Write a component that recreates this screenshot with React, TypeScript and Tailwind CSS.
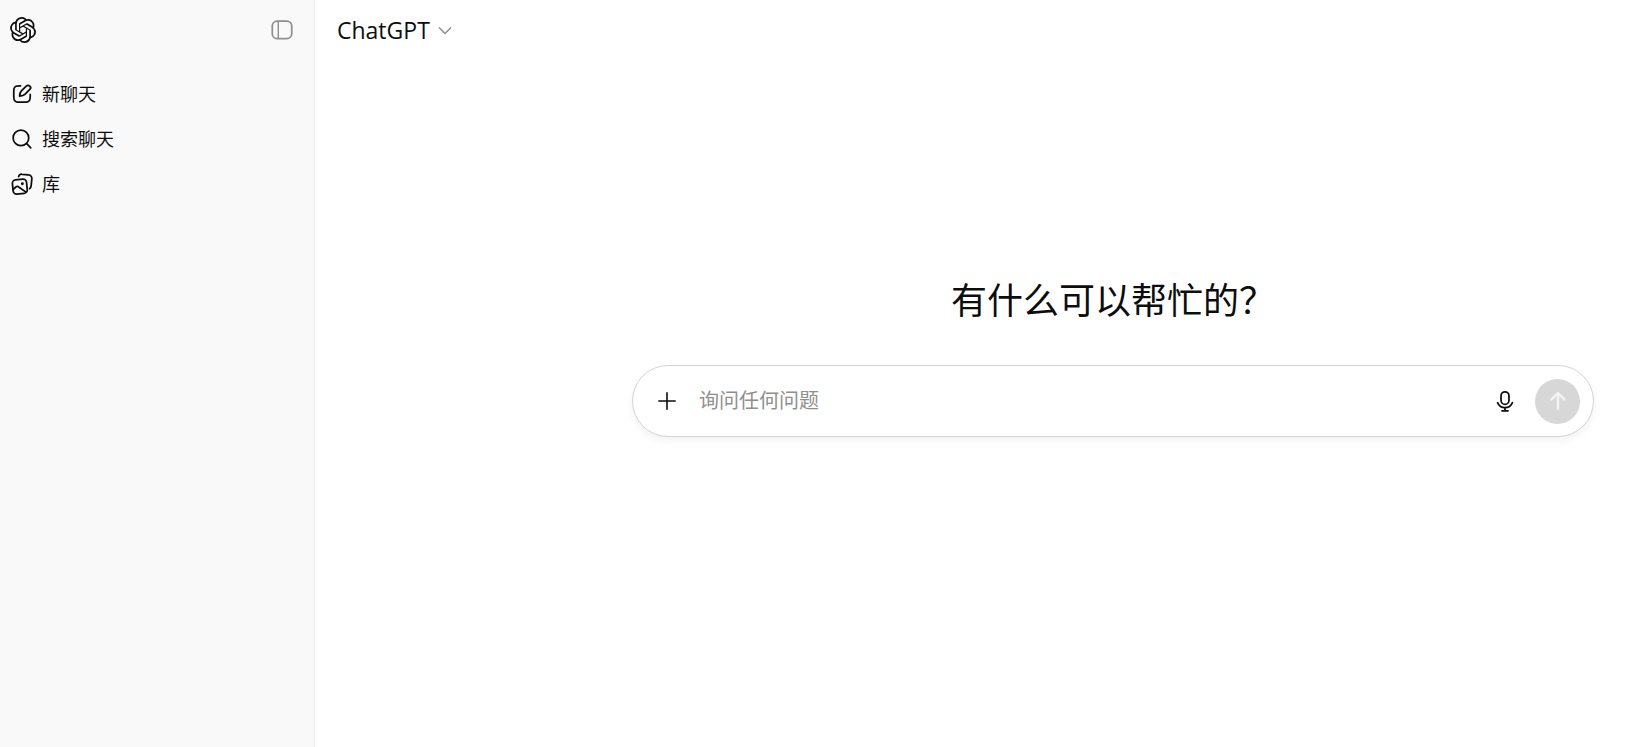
import React from 'react';
import { SiOpenai } from 'react-icons/si';

interface IconProps {
    className?: string;
}

const strokeProps = {
    viewBox: '0 0 20 20',
    fill: 'none',
    stroke: 'currentColor',
    strokeWidth: 1.45,
    strokeLinecap: 'round' as const,
    strokeLinejoin: 'round' as const,
    'aria-hidden': true,
};

const SidebarIcon: React.FC<IconProps> = ({ className }) => (
    <svg {...strokeProps} className={className}>
        <rect x="1.9" y="2.7" width="16.2" height="14.4" rx="4" />
        <path d="M6.9 3v14" strokeWidth={1.2} />
    </svg>
);

const EditIcon: React.FC<IconProps> = ({ className }) => (
    <svg {...strokeProps} className={className}>
        <path d="M8.8 3.2H8.1c-1.7 0-2.500.1-3.100.4A3.300 3.300 0 0 0 3.500 5.100c-.37.75-.37 1.700-.37 3.600v2.600c0 1.900 0 2.850.37 3.600a3.300 3.300 0 0 0 1.500 1.500c.75.37 1.700.37 3.600.37h2.800c1.900 0 2.850 0 3.600-.37a3.300 3.300 0 0 0 1.500-1.500c.37-.75.37-1.700.37-3.600v-.9" />
        <path d="M13.300 3.600 9.500 7.400c-.9.9-1.300 2.200-1.500 4.400 2.200-.2 3.500-.6 4.400-1.500l4.100-4.100c.8-.8.9-1.900.2-2.600-.9-.9-2.500-.8-3.400 0Z" />
    </svg>
);

const SearchIcon: React.FC<IconProps> = ({ className }) => (
    <svg {...strokeProps} className={className}>
        <circle cx="9.1" cy="9.1" r="6.5" />
        <path d="m13.9 13.9 3.4 3.4" />
    </svg>
);

const LibraryIcon: React.FC<IconProps> = ({ className }) => (
    <svg {...strokeProps} className={className}>
        <path d="M7.200 3.800c.4-1.300 1.500-2.100 2.900-1.900l5.300.5c1.900.2 3 1.600 2.800 3.400l-.6 5.800c-.1 1-.6 1.800-1.300 2.300" />
        <rect x="2.300" y="6.300" width="11.800" height="11.800" rx="2.800" transform="rotate(-6 8.200 12.200)" />
        <path d="m2.700 14.500 2-1.800c.8-.8 2-.8 2.800 0l5.900 4.100" />
        <circle cx="10.300" cy="9.800" r="1.200" fill="currentColor" stroke="none" />
    </svg>
);

const ChevronIcon: React.FC<IconProps> = ({ className }) => (
    <svg viewBox="0 0 14 14" fill="none" stroke="currentColor" strokeWidth="1.5" className={className} aria-hidden="true">
        <path d="m1 4.500 6 6 6-6" />
    </svg>
);

const PlusIcon: React.FC<IconProps> = ({ className }) => (
    <svg {...strokeProps} strokeWidth={1.33} className={className}>
        <path d="M10 3.200v13.600M3.200 10h13.600" />
    </svg>
);

const MicIcon: React.FC<IconProps> = ({ className }) => (
    <svg {...strokeProps} className={className}>
        <rect x="6.700" y="2.300" width="6.600" height="10.500" rx="3.300" />
        <path d="M3.800 11.400c1 2.400 3.400 4.200 6.200 4.200s5.200-1.800 6.200-4.200M10 15.600v2.400M7.500 18.200h5" />
    </svg>
);

const SendIcon: React.FC<IconProps> = ({ className }) => (
    <svg {...strokeProps} strokeWidth={2} className={className}>
        <path d="M10 16.500V3.800M4.600 8.700l5.400-5.200 5.400 5.200" />
    </svg>
);

const navItems = [
    { label: '新聊天', icon: EditIcon },
    { label: '搜索聊天', icon: SearchIcon },
    { label: '库', icon: LibraryIcon },
];

const Sidebar: React.FC = () => (
    <aside className="w-[315px] shrink-0 border-r border-[#ececec] bg-[#f9f9f9]">
        <div className="flex h-[59px] items-center justify-between pr-5 pl-[10px]">
            <a href="#" aria-label="ChatGPT">
                <SiOpenai className="size-[26px]" />
            </a>
            <button type="button" aria-label="关闭边栏" className="text-[#8f8f8f]">
                <SidebarIcon className="size-6" />
            </button>
        </div>
        <nav className="mt-3">
            {navItems.map(({ label, icon: Icon }) => (
                <a key={label} href="#" className="flex h-[45px] items-center gap-2 px-[10px] text-lg">
                    <Icon className="size-6" />
                    <span>{label}</span>
                </a>
            ))}
        </nav>
    </aside>
);

const Composer: React.FC = () => (
    <form
        className="flex h-[72px] items-center rounded-full border border-[#d4d4d4] bg-white pr-[13px] pl-[22px] shadow-[0_4px_8px_rgba(0,0,0,0.05)]"
        onSubmit={(e) => e.preventDefault()}
    >
        <button type="button" aria-label="添加">
            <PlusIcon className="size-6" />
        </button>
        <input
            type="text"
            aria-label="询问任何问题"
            placeholder="询问任何问题"
            className="ml-5 min-w-0 flex-1 text-xl outline-none placeholder:text-[#8f8f8f]"
        />
        <button type="button" aria-label="听写">
            <MicIcon className="size-6" />
        </button>
        <button
            type="submit"
            aria-label="发送"
            className="ml-[18px] flex size-[45px] items-center justify-center rounded-full bg-[#d7d7d7] text-[#f4f4f4]"
        >
            <SendIcon className="size-6" />
        </button>
    </form>
);

export default function App() {
    return (
        <div className="flex min-h-screen bg-white font-['Open_Sans','Noto_Sans_CJK_SC',sans-serif] text-[#0d0d0d]">
            <Sidebar />
            <div className="flex min-w-0 flex-1 flex-col">
                <header className="flex h-[59px] items-center pl-[22px]">
                    <button type="button" className="flex items-center gap-2 text-[23px] leading-8">
                        ChatGPT
                        <ChevronIcon className="size-[14px] text-[#8f8f8f]" />
                    </button>
                </header>
                <main className="pt-[218px] pr-12 pl-[317px]">
                    <h1 className="mb-10 text-center text-4xl leading-12">有什么可以帮忙的？</h1>
                    <Composer />
                </main>
            </div>
        </div>
    );
}
